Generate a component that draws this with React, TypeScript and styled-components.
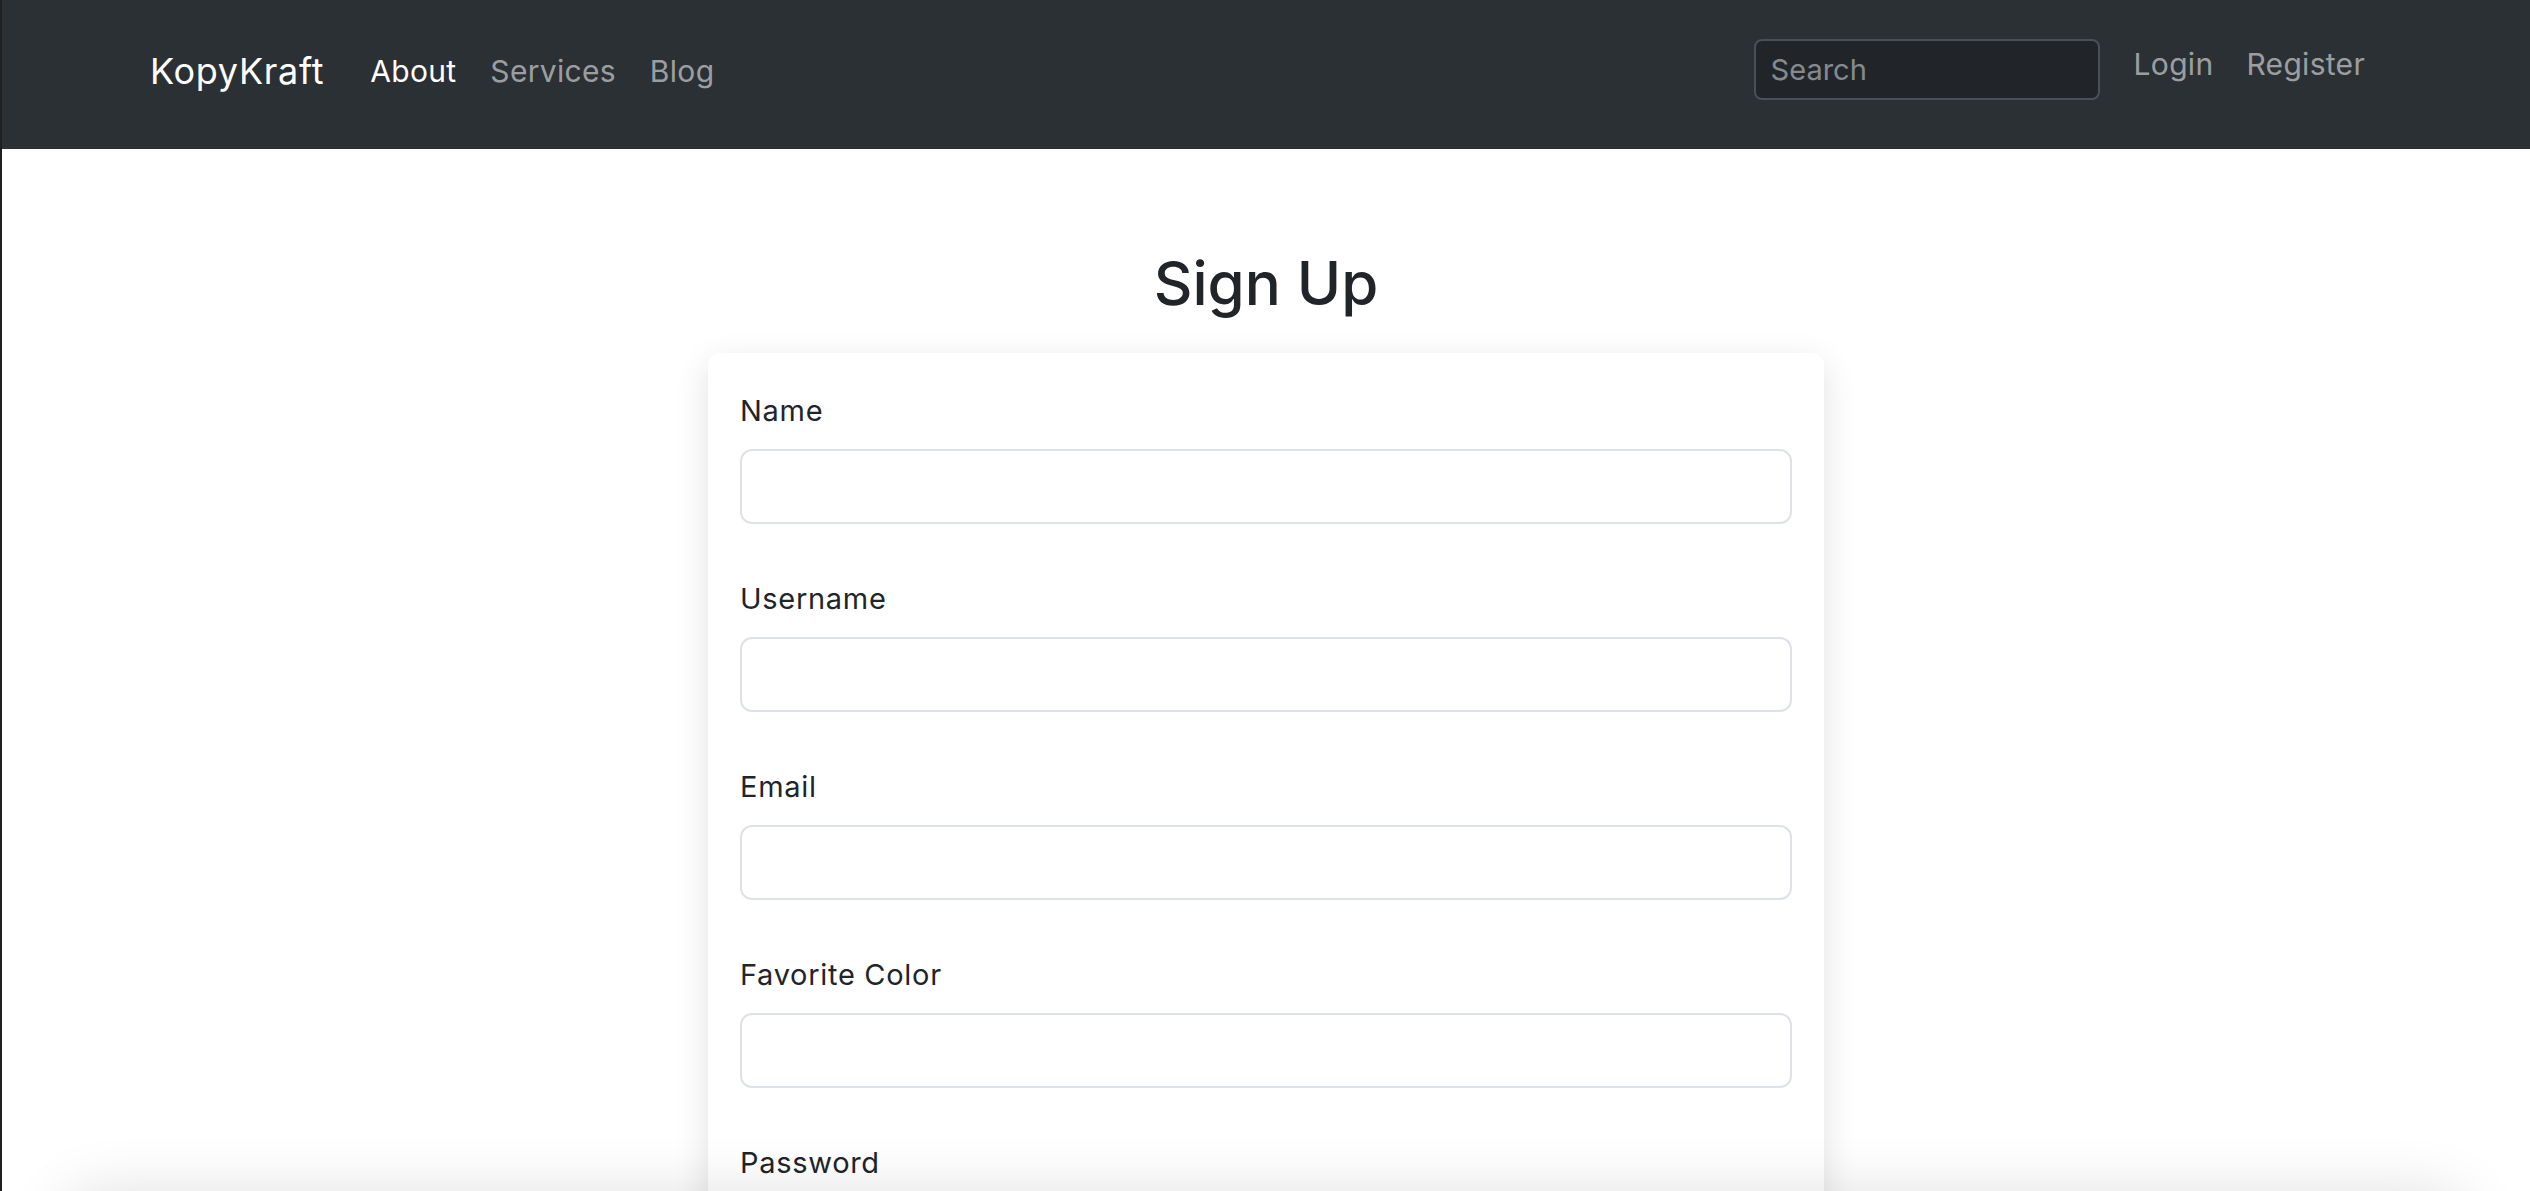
import React from 'react'
import styled, { createGlobalStyle } from 'styled-components'

const GlobalStyle = createGlobalStyle`
  body {
    margin: 0;
    font-family: "Inter", "Liberation Sans", sans-serif;
    color: #212529;
    background: #fff;
  }
`

const fields = ['Name', 'Username', 'Email', 'Favorite Color', 'Password']

export default function App() {
    return (
        <Page>
            <GlobalStyle />
            <Navbar>
                <Brand>KopyKraft</Brand>
                <NavList>
                    <NavLink $active>About</NavLink>
                    <NavLink>Services</NavLink>
                    <NavLink>Blog</NavLink>
                </NavList>
                <Spacer />
                <SearchInput placeholder="Search" />
                <RightNav>
                    <NavLink>Login</NavLink>
                    <NavLink>Register</NavLink>
                </RightNav>
            </Navbar>
            <Main>
                <Title>Sign Up</Title>
                <Card>
                    {fields.map(item => {
                        return <Field key={item}>
                            <Label>{item}</Label>
                            <Input type={item === 'Password' ? 'password' : 'text'} />
                        </Field>
                    })}
                    <SubmitButton>Sign Up</SubmitButton>
                </Card>
            </Main>
            <BottomShade />
        </Page>
    )
}

const Page = styled.div`
  min-height: 100vh;
  border-left: 2px solid #1f1f1f;
  box-sizing: border-box;
`

const Navbar = styled.nav`
  height: 149px;
  box-sizing: border-box;
  background: #2b3035;
  display: flex;
  align-items: center;
  padding: 0 165px 7px 148px;
`

const Brand = styled.a`
  font-size: 36px;
  line-height: 54px;
  color: #fff;
  margin-right: 46px;
  letter-spacing: 0.7px;
`

const NavList = styled.div`
  display: flex;
  gap: 34px;
`

const NavLink = styled.a<{ $active?: boolean }>`
  font-size: 30px;
  line-height: 45px;
  letter-spacing: 0.3px;
  color: ${p => (p.$active ? '#fff' : 'rgba(255, 255, 255, 0.55)')};
  cursor: pointer;
`

const Spacer = styled.div`
  flex: 1;
`

const SearchInput = styled.input`
  width: 346px;
  height: 61px;
  box-sizing: border-box;
  background: #212529;
  border: 2px solid #495057;
  border-radius: 8px;
  padding: 0 15px;
  margin-top: -4px;
  font-family: inherit;
  font-size: 29px;
  color: #dee2e6;
  outline: none;

  &::placeholder {
    color: rgba(222, 226, 230, 0.55);
  }
`

const RightNav = styled.div`
  display: flex;
  gap: 33px;
  margin-left: 34px;
  margin-bottom: 14px;
`

const Main = styled.main`
  display: flex;
  flex-direction: column;
  align-items: center;
`

const Title = styled.h1`
  margin: 98px 0 34px;
  font-size: 60px;
  line-height: 72px;
  font-weight: 500;
  color: #212529;
`

const Card = styled.div`
  width: 1116px;
  box-sizing: border-box;
  padding: 37px 32px;
  border-radius: 12px;
  background: #fff;
  box-shadow: 0 10px 34px rgba(0, 0, 0, 0.12);
  margin-bottom: 80px;
`

const Field = styled.div`
  margin-bottom: 54px;
`

const Label = styled.label`
  display: block;
  font-size: 29px;
  line-height: 42px;
  letter-spacing: 0.7px;
  margin-bottom: 17px;
`

const Input = styled.input`
  display: block;
  width: 100%;
  height: 75px;
  box-sizing: border-box;
  border: 2px solid #dee2e6;
  border-radius: 12px;
  padding: 0 22px;
  font-family: inherit;
  font-size: 28px;
  color: #212529;
  outline: none;
`

const SubmitButton = styled.button`
  font-family: inherit;
  font-size: 28px;
  padding: 14px 28px;
  border: none;
  border-radius: 12px;
  background: #0d6efd;
  color: #fff;
`

const BottomShade = styled.div`
  position: fixed;
  left: 60px;
  right: 60px;
  bottom: -120px;
  height: 120px;
  border-radius: 40px;
  background: #fff;
  box-shadow: 0 0 60px rgba(0, 0, 0, 0.12);
`
